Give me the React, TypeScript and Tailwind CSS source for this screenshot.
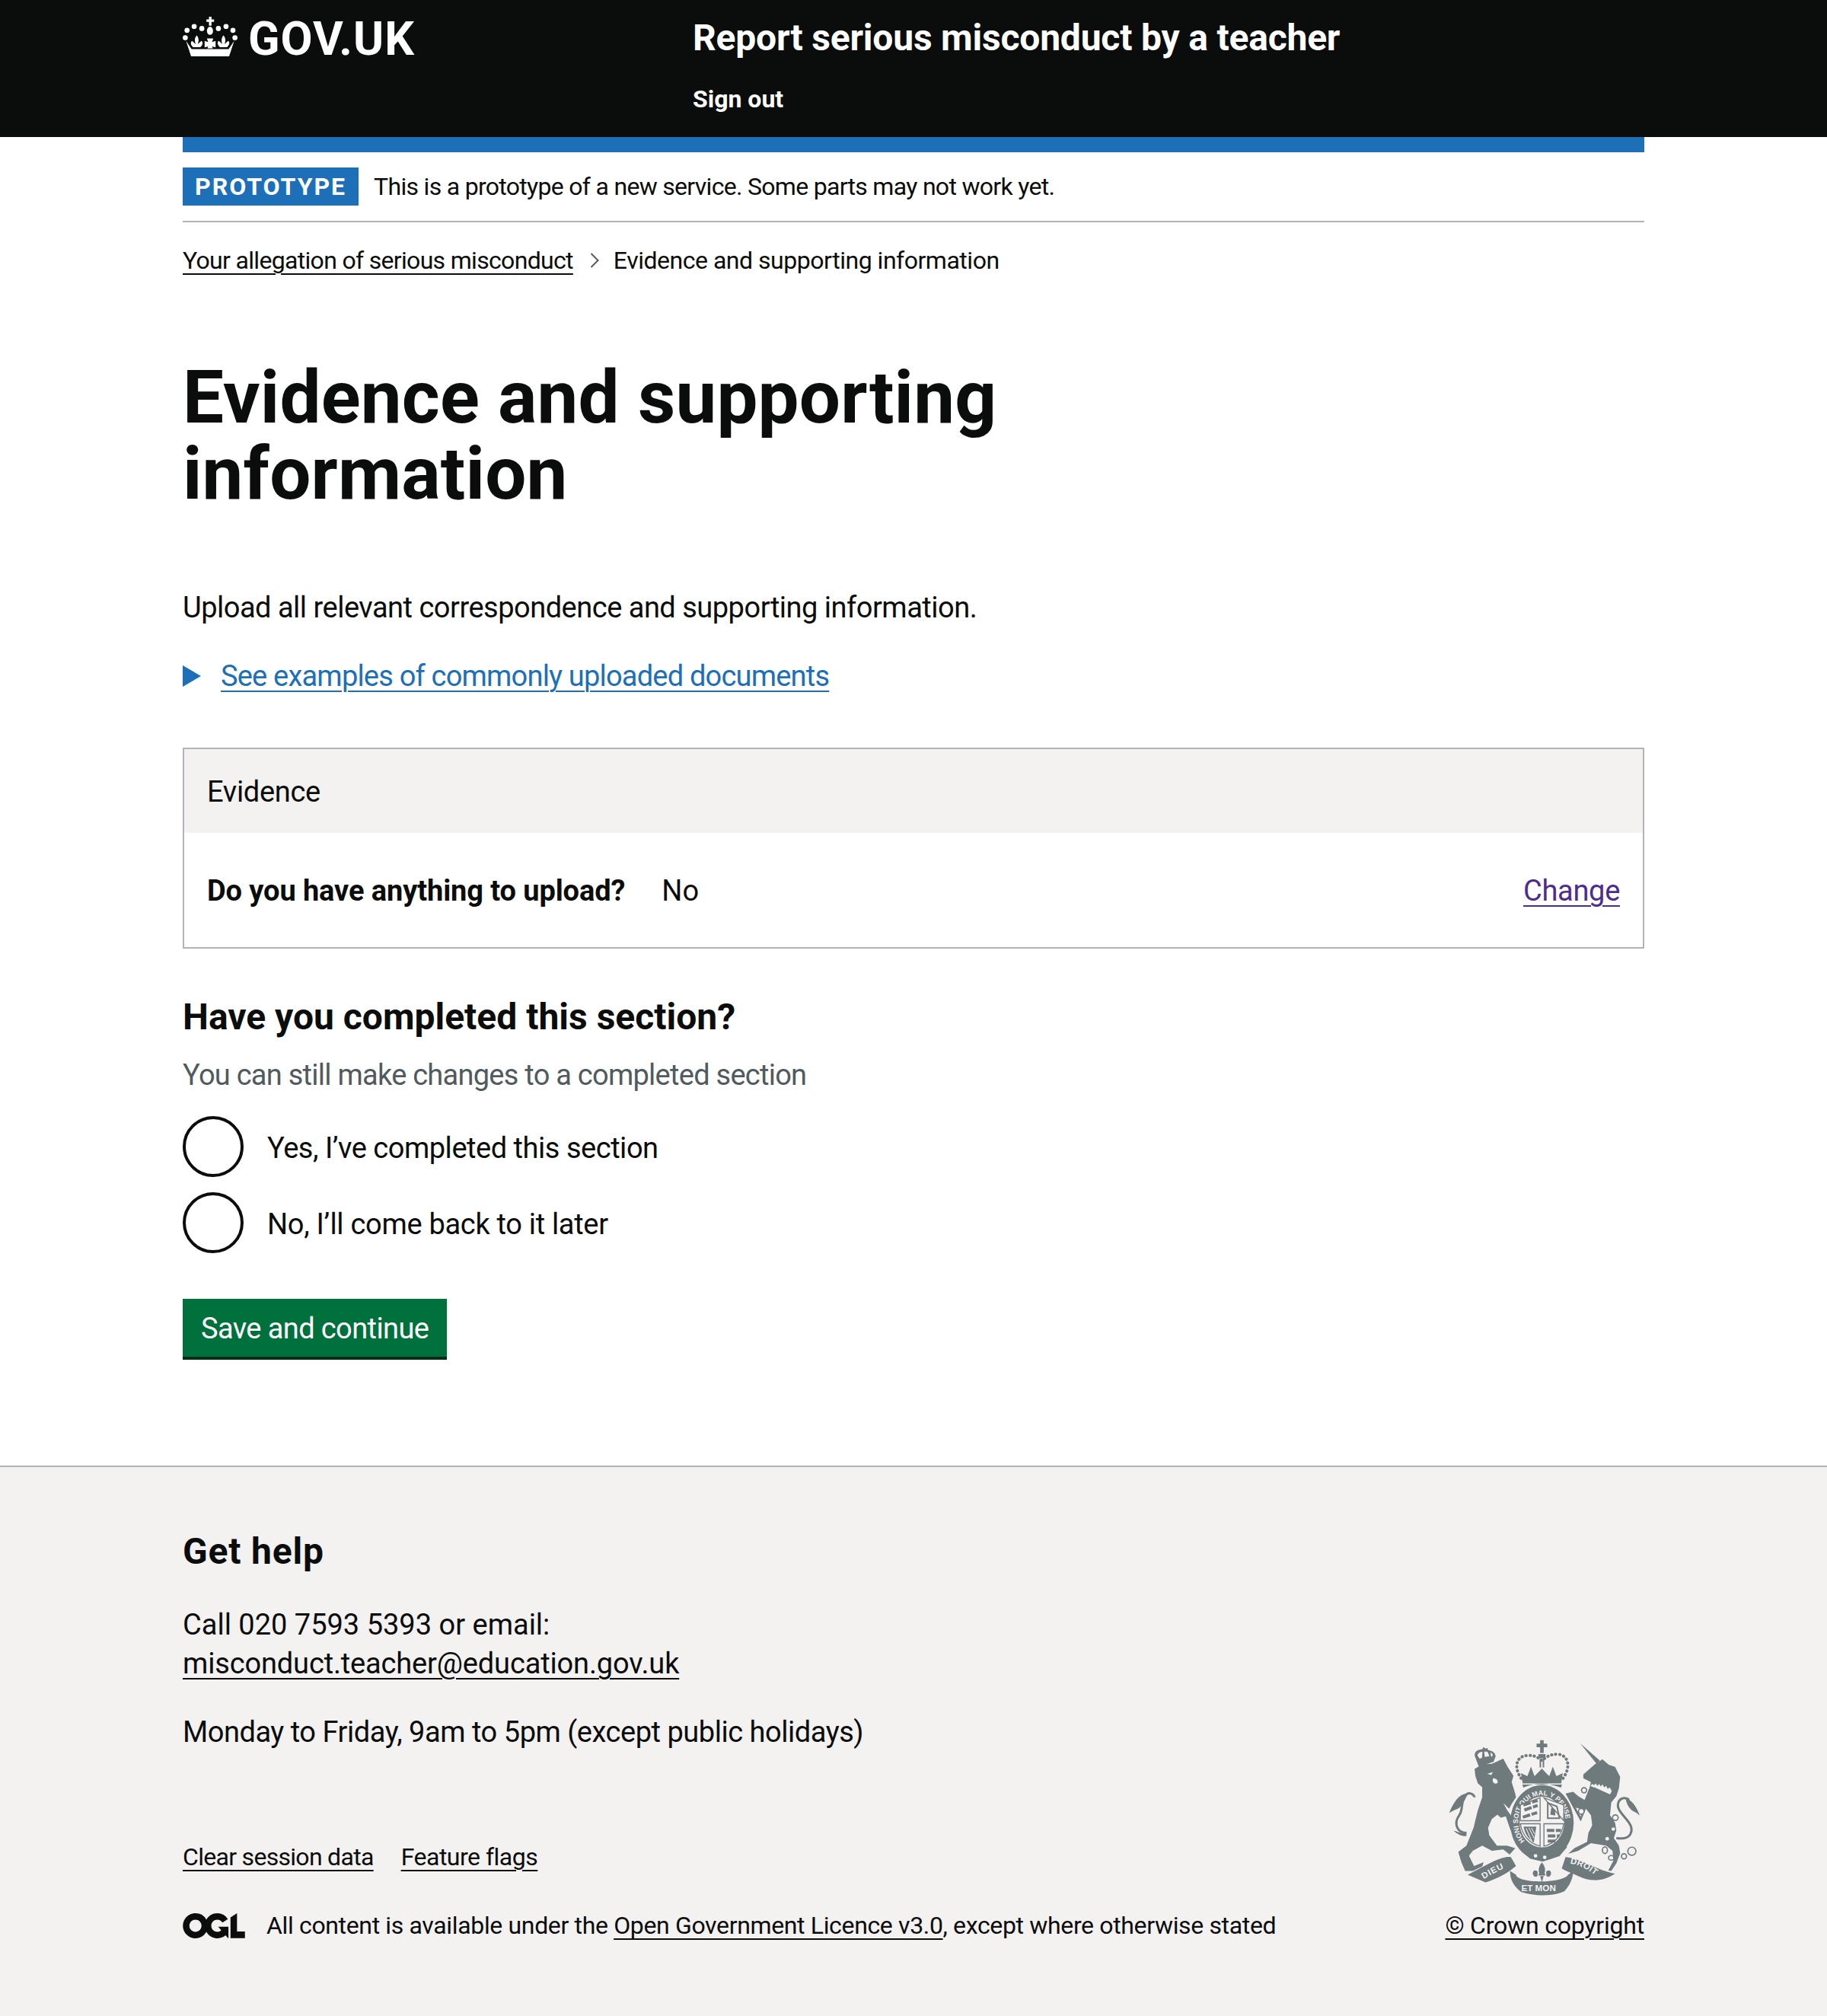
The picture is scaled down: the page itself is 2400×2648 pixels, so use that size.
const Crown = () => (
  <svg viewBox="45 35 215 155" className="w-[72px] h-[52px] shrink-0" fill="#fff">
    <path d="M148 35h10v10h10v10h-10v15h-10V55h-10V45h10z" />
    <ellipse cx="152" cy="90" rx="12" ry="16" />
    {[[120, 81], [90, 73], [62, 88], [55, 117], [185, 81], [215, 73], [242, 88], [250, 117]].map(([cx, cy]) => (
      <circle key={cx} cx={cx} cy={cy} r="10" />
    ))}
    <path d="M58 130l22 32h145l22-32-20 60H78z" />
    <path d="M100 108c9 10 9 22 4 34l14-12c8 4 6 16-4 24H86c-10-8-12-20-4-24l14 12c-5-12-5-24 4-34z" />
    <path d="M205 108c9 10 9 22 4 34l14-12c8 4 6 16-4 24h-28c-10-8-12-20-4-24l14 12c-5-12-5-24 4-34z" />
    <path d="M140 120h25l-5 14 14-4v25l-14-4 3 8h-21l3-8-14 4v-25l14 4z" />
  </svg>
);

const crestGrey = "#6f7a7d";
const crestBg = "#f3f2f1";

const Crest = () => (
  <svg viewBox="130 70 755 620" className="w-[252px] h-[207px] mr-[5px]" fill={crestGrey}>
    {/* lion */}
    <path d="M232 188L262 170L300 168L345 148L362 180L385 215L378 240L392 285L395 300L378 325L368 345L345 322L360 350L385 385L405 410L400 435L385 445L372 425L355 375L335 380L322 368L300 385L285 420L290 450L320 490L360 490L392 500L370 525L345 505L300 510L262 490L225 510L210 530L230 570L268 555L262 572L225 590L195 590L180 555L168 515L200 490L228 420L245 350L262 300L262 260L245 245L235 215Z" />
    <path d="M200 440C160 440 150 400 172 370C190 345 175 300 205 285C220 280 232 295 232 300" fill="none" stroke={crestGrey} strokeWidth="9" />
    <path d="M205 285C170 285 150 320 132 362C155 345 165 350 178 335C190 320 200 300 205 285Z" />
    <path d="M200 440C170 445 160 430 150 432C165 445 180 455 200 452Z" />
    <path d="M282 208l22-8-6 12zM305 225c12 0 18 8 18 14s-6 8-12 6-10-10-6-20z" fill={crestBg} />
    {/* lion crown */}
    <path d="M232 135c0-18 16-24 30-24l5-9 8 6 8-2 2 8c14 2 28 8 30 24l-8 22-58 20z" />
    <path d="M243 135c2-9 10-14 20-14l-2 24-9 3zM270 120c6 0 10 0 14 2l6 16-18 3zM294 124c6 2 9 6 10 10l-6 8z" fill={crestBg} />
    {/* unicorn */}
    <path d="M648 88L725 155L712 168Z" />
    <path d="M660 210L705 170L735 150L760 172L785 180L805 220L800 265L790 295L770 320L765 370L785 400L790 430L780 460L800 490L805 520L790 560L770 590L758 588L778 550L775 510L750 490L690 480L640 510L600 522L625 500L675 475L680 440L695 410L690 370L670 345L650 395L620 340L590 285L620 278L640 295L665 310L685 260L690 240L660 225Z" />
    <path d="M688 255l8-8 6 6 6-8 8 10 6-8 6 10 8-8 6 12 8-6 6 12 8-6 8 14-8 16z" fill={crestBg} />
    <path d="M700 262l76 34" stroke={crestGrey} strokeWidth="5" />
    <path d="M630 340l25 8-5 28z" fill={crestBg} />
    <path d="M790 460C850 470 860 430 840 400C815 365 785 345 800 315C810 300 830 300 840 310" fill="none" stroke={crestGrey} strokeWidth="9" />
    <path d="M825 302C850 310 870 335 882 372C865 355 855 358 845 345C835 335 830 320 825 302Z" />
    <circle cx="663" cy="272" r="10" fill={crestBg} stroke={crestGrey} strokeWidth="5" />
    <circle cx="652" cy="355" r="11" fill={crestBg} stroke={crestGrey} strokeWidth="5" />
    <circle cx="786" cy="380" r="11" fill={crestBg} stroke={crestGrey} strokeWidth="5" />
    <ellipse cx="745" cy="508" rx="10" ry="13" fill="none" stroke={crestGrey} strokeWidth="5" />
    <ellipse cx="770" cy="538" rx="11" ry="9" fill="none" stroke={crestGrey} strokeWidth="5" />
    <circle cx="820" cy="532" r="10" fill="none" stroke={crestGrey} strokeWidth="5" />
    <circle cx="851" cy="512" r="16" fill="none" stroke={crestGrey} strokeWidth="5" />
    <circle cx="778" cy="425" r="7" fill={crestBg} />
    <circle cx="754" cy="463" r="7" fill={crestBg} />
    {/* crown */}
    <path d="M490 75h14v14h14v14h-14v22h-14v-22h-14V89h14z" />
    <path d="M483 130h28v16h-28zM488 150h6v32h-6zM500 150h6v32h-6z" />
    <path d="M415 225C385 180 395 135 445 135C470 135 485 145 497 155C510 145 525 130 560 130C605 135 610 185 580 225" fill="none" stroke={crestGrey} strokeWidth="12" strokeDasharray="1 15" strokeLinecap="round" />
    <path d="M415 205l25 12 14-38 14 38 29-30 29 30 14-38 14 38 25-12-6 40H421z" />
    <path d="M424 262c45-20 100-20 148 0l4-12H420z" />
    {/* garter */}
    <ellipse cx="497" cy="400" rx="125" ry="148" />
    <ellipse cx="497" cy="397" rx="88" ry="100" fill={crestBg} />
    <path id="garter" d="M430 472A94 106 0 1 1 564 472" fill="none" />
    <text fontFamily="'Liberation Sans',sans-serif" fontWeight="700" fontSize="27" fill={crestBg}>
      <textPath href="#garter">HONI SOIT QUI MAL Y PENSE</textPath>
    </text>
    {/* shield */}
    <path d="M412 392V330l78-28v90zM505 302l78 28v62zM412 404h78v88c-40-10-70-40-78-88zM505 404h78c-8 48-38 78-78 88z" fill={crestBg} stroke={crestGrey} strokeWidth="4" />
    <path d="M424 330l56-18M428 350l52-18M422 378l56-18M516 430h56M520 452h46M520 472h36" stroke={crestGrey} strokeWidth="12" strokeDasharray="30 6" />
    <path d="M520 322l36 14 10 46h-46z" fill="none" stroke={crestGrey} strokeWidth="6" />
    <path d="M534 340l14 8 2 24-20-4z" />
    <path d="M425 415h50l-10 62c-22-14-36-36-40-62z" />
    <path d="M435 422l22 50M446 420l20 40M456 420l12 24" stroke={crestBg} strokeWidth="3" />
    {/* scroll + fleur */}
    <path d="M420 490l40 24 40 10 50-12 40-30 6 14-30 35-66 22-50-12-34-30z" />
    <circle cx="472" cy="530" r="7" fill={crestBg} />
    <circle cx="508" cy="536" r="7" fill={crestBg} />
    <path d="M497 556c13 14 15 30 10 44h-20c-5-14-3-30 10-44zM484 600h26v8h-26zM480 592c-14-12-24 4-16 16 4 6 12 6 16 0zM514 592c14-12 24 4 16 16-4 6-12 6-16 0zM490 610h14l-7 24z" />
    <path d="M205 605C290 560 340 530 375 535L395 570C360 600 320 620 275 635Z" />
    <path d="M372 590C370 620 385 650 415 672C470 690 540 690 585 670C605 650 620 620 620 590L600 605C580 640 400 640 395 605Z" />
    <path d="M575 580L590 535C650 540 720 590 785 600C740 630 690 635 640 610C620 600 590 590 575 580Z" />
    <path id="dieu" d="M268 622Q320 590 372 568" fill="none" />
    <path id="droit" d="M608 560Q670 570 725 624" fill="none" />
    <text fontFamily="'Liberation Sans',sans-serif" fontWeight="700" fontSize="34" fill={crestBg} letterSpacing="3">
      <textPath href="#dieu">DIEU</textPath>
    </text>
    <text fontFamily="'Liberation Sans',sans-serif" fontWeight="700" fontSize="34" fill={crestBg} letterSpacing="1">
      <textPath href="#droit">DROIT</textPath>
    </text>
    <text x="416" y="670" fontFamily="'Liberation Sans',sans-serif" fontWeight="700" fontSize="35" fill={crestBg}>ET MON</text>
  </svg>
);

const OglLogo = () => (
  <svg viewBox="0 0 483.2 195.7" className="w-[82px] h-[33px] shrink-0" fill="#0b0c0c">
    <path d="M421.5 142.8V.1l-50.7 32.3v161.1h112.4v-50.7zm-122.3-9.6A47.12 47.12 0 0 1 221 97.8c0-26 21.1-47.1 47.1-47.1 16.7 0 31.4 8.7 39.7 21.8l42.7-27.2A97.63 97.63 0 0 0 268.1 0c-36.5 0-68.3 20.1-85.1 49.7A98 98 0 0 0 97.8 0C43.9 0 0 43.9 0 97.8s43.9 97.8 97.8 97.8c36.5 0 68.3-20.1 85.1-49.7a97.76 97.76 0 0 0 149.6 25.4l19.4 22.2h3v-87.8h-80l24.3 27.5zM97.8 145c-26 0-47.1-21.1-47.1-47.1s21.1-47.1 47.1-47.1 47.2 21 47.2 47S123.8 145 97.8 145" />
  </svg>
);

const Radio = ({ label, tracking }: { label: string; tracking: string }) => (
  <label className="flex items-center h-[80px]">
    <span className="w-[80px] h-[80px] rounded-full border-4 border-[#0b0c0c] bg-white shrink-0" />
    <span className={`ml-[31px] pt-[3px] text-[38px] leading-[50px] ${tracking}`}>{label}</span>
  </label>
);

export default function App() {
  return (
    <div className="min-h-[2648px] flex flex-col bg-white text-[#0b0c0c] font-['Roboto',sans-serif]">
      <header className="bg-[#0b0c0c] h-[180px] text-white">
        <div className="w-[1920px] mx-auto flex">
          <div className="w-[670px] flex items-start pt-[22px] gap-[14px]">
            <Crown />
            <span className="pt-[2px] text-[61px] leading-[54px] font-bold tracking-[1px]">GOV.UK</span>
          </div>
          <div className="pt-[20px]">
            <div className="text-[48px] leading-[60px] font-bold tracking-[-0.2px]">Report serious misconduct by a teacher</div>
            <a className="block mt-[30px] text-[32px] leading-[40px] font-bold">Sign out</a>
          </div>
        </div>
      </header>

      <main className="w-[1920px] mx-auto">
        <div className="h-[20px] bg-[#1d70b8]" />
        <div className="pt-[20px] pb-[20px] border-b-2 border-[#b1b4b6] flex items-center">
          <strong className="h-[50px] px-[16px] bg-[#1d70b8] text-white text-[32px] leading-[50px] font-bold tracking-[2px]">PROTOTYPE</strong>
          <span className="ml-[20px] text-[32px] leading-[40px] tracking-[-0.7px]">This is a prototype of a new service. Some parts may not work yet.</span>
        </div>

        <nav className="mt-[30px] flex items-center text-[32px] leading-[40px] tracking-[-0.68px]">
          <a className="underline decoration-2 underline-offset-[6px]">Your allegation of serious misconduct</a>
          <svg viewBox="0 0 12 20" className="w-[12px] h-[20px] ml-[22px] mr-[19px]" fill="none" stroke="#505a5f" strokeWidth="2">
            <path d="M1.5 1l9 9-9 9" />
          </svg>
          <span className="tracking-[-0.48px]">Evidence and supporting information</span>
        </nav>

        <h1 className="mt-[110px] w-[1260px] text-[96px] leading-[100px] font-bold tracking-[0.2px]">Evidence and supporting information</h1>

        <p className="mt-[101px] text-[38px] leading-[50px] tracking-[-0.5px]">Upload all relevant correspondence and supporting information.</p>

        <div className="mt-[40px] flex items-center h-[50px] text-[#1d70b8]">
          <svg viewBox="0 0 24 28" className="w-[24px] h-[28px] mr-[26px]" fill="#1d70b8">
            <path d="M0 0l24 14L0 28z" />
          </svg>
          <a className="text-[38px] leading-[50px] tracking-[-0.8px] underline decoration-2 underline-offset-[6px]">See examples of commonly uploaded documents</a>
        </div>

        <section className="mt-[69px] border-2 border-[#b1b4b6]">
          <div className="h-[110px] bg-[#f3f2f1] px-[30px] pt-[2px] flex items-center text-[38px] tracking-[-0.3px]">Evidence</div>
          <div className="h-[150px] px-[30px] pt-[2px] flex items-center text-[38px] leading-[50px]">
            <span className="font-bold tracking-[-0.1px]">Do you have anything to upload?</span>
            <span className="ml-[48px]">No</span>
            <a className="ml-auto text-[#4c2c92] tracking-[-0.3px] underline decoration-2 underline-offset-[6px]">Change</a>
          </div>
        </section>

        <h2 className="mt-[60px] text-[48px] leading-[60px] font-bold">Have you completed this section?</h2>
        <div className="mt-[21px] text-[38px] leading-[50px] text-[#505a5f] tracking-[-0.74px]">You can still make changes to a completed section</div>

        <div className="mt-[29px] flex flex-col gap-[20px]">
          <Radio label="Yes, I’ve completed this section" tracking="tracking-[-0.47px]" />
          <Radio label="No, I’ll come back to it later" tracking="tracking-[-0.3px]" />
        </div>

        <button className="mt-[60px] block h-[80px] px-[24px] pb-[2px] bg-[#00703c] text-white text-[38px] leading-[50px] tracking-[-0.6px] shadow-[inset_0_-4px_0_#002d18]">
          Save and continue
        </button>
      </main>

      <footer className="mt-[139px] flex-1 border-t-2 border-[#b1b4b6] bg-[#f3f2f1]">
        <div className="w-[1920px] mx-auto pt-[80px] flex justify-between items-end">
          <div>
            <h2 className="pt-[1px] text-[48px] leading-[60px] font-bold tracking-[0.8px]">Get help</h2>
            <p className="mt-[41px] text-[38px] leading-[51px]">
              Call 020 7593 5393 or email:
              <br />
              <a className="tracking-[-0.15px] underline decoration-2 underline-offset-[6px]">misconduct.teacher@education.gov.uk</a>
            </p>
            <p className="mt-[39px] text-[38px] leading-[50px] tracking-[-0.47px]">Monday to Friday, 9am to 5pm (except public holidays)</p>
            <div className="mt-[119px] flex gap-[36px] text-[32px] leading-[40px]">
              <a className="tracking-[-0.7px] underline decoration-2 underline-offset-[6px]">Clear session data</a>
              <a className="tracking-[-0.5px] underline decoration-2 underline-offset-[6px]">Feature flags</a>
            </div>
            <div className="mt-[50px] flex items-center text-[32px] leading-[40px] tracking-[-0.35px]">
              <OglLogo />
              <span className="ml-[28px]">
                All content is available under the <a className="underline decoration-2 underline-offset-[6px]">Open Government Licence v3.0</a>, except where otherwise stated
              </span>
            </div>
          </div>
          <div className="flex flex-col items-end">
            <Crest />
            <a className="mt-[18px] text-[32px] leading-[40px] tracking-[-0.2px] underline decoration-2 underline-offset-[6px]">© Crown copyright</a>
          </div>
        </div>
      </footer>
    </div>
  );
}
